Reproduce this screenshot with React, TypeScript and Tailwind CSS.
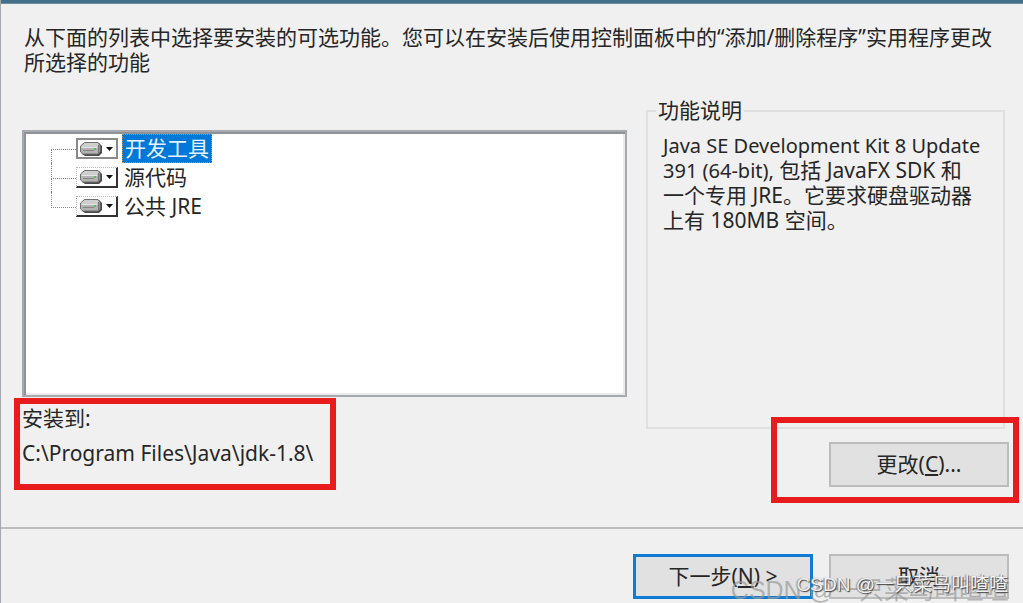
import React from "react";

function DriveIcon() {
  return (
    <svg viewBox="0 0 22 14" className="h-[14px] w-[22px]" aria-hidden="true">
      <path d="M5 1h14l3 3v7l-3 3H5l-3-2V4z" fill="#4a4a4a" />
      <path d="M4.500 .5h13.500l2 2.500v7l-2 2H3L.5 10V4z" fill="#b2b2b2" stroke="#707070" />
      <path d="M5 1h12.500l1 3H1.500z" fill="#cfcfcf" />
      <path d="M1.500 4.500h16v1.500h-16z" fill="#e6e6e6" />
      <path d="M3 8.500h11" stroke="#858585" />
      <rect x="14" y="6" width="2" height="2" fill="#4fbf58" />
      <path d="M18.500 3v8" stroke="#777" />
    </svg>
  );
}

function Feature({ label, selected, last }: { label: string; selected?: boolean; last?: boolean }) {
  return (
    <li className="flex h-[29px] items-center">
      <span className="flex h-full w-[25px] flex-col" aria-hidden="true">
        <span className={selected ? "h-[16px] border-b border-dotted border-[#888]" : "h-[16px] border-b border-l border-dotted border-[#888]"} />
        <span className={last ? "flex-1" : "flex-1 border-l border-dotted border-[#888]"} />
      </span>
      <button
        type="button"
        aria-label={label}
        className={
          selected
            ? "flex h-[21px] w-[42px] items-center gap-[4px] border-2 border-[#8a8a8a] pl-[2px]"
            : "flex h-[21px] w-[42px] items-center gap-[4px] border-r-2 border-b-2 border-l border-t border-dotted border-r-[#333] border-b-[#333] border-t-[#bbb] border-l-[#bbb] pl-[3px] [border-bottom-style:solid] [border-right-style:solid]"
        }
      >
        <DriveIcon />
        <svg viewBox="0 0 7 4" className="h-[4px] w-[7px]" aria-hidden="true">
          <path d="M0 0h7L3.500 4z" fill="#111" />
        </svg>
      </button>
      <span
        className={
          selected
            ? "ml-[4px] flex h-[29px] items-center border border-dotted border-[#d98b46] bg-[#0078d7] px-[2px] text-[#e6f3ff]"
            : "ml-[6px]"
        }
      >
        {label}
      </span>
    </li>
  );
}

export default function App() {
  return (
    <div className="relative flex min-h-screen flex-col overflow-hidden border-l border-[#a5a8ad] bg-[#f0f0f0] font-['Noto_Sans','Noto_Sans_CJK_SC',sans-serif] text-[21px] leading-[25px] text-[#262626]">
      <div className="h-[4px] border-b border-[#6e8b9e] bg-[#44708c]" />
      <main className="flex flex-col pl-[21px] pr-[18px]">
        <p className="mt-[21px] h-[80px] pl-[2px]">
          从下面的列表中选择要安装的可选功能。您可以在安装后使用控制面板中的“添加/删除程序”实用程序更改所选择的功能
        </p>
        <div className="flex gap-[19px]">
          <div className="flex min-w-0 flex-1 flex-col">
            <ul className="mt-[25px] h-[267px] border-2 border-[#a6a9ad] bg-white pl-[27px] pt-[2px] shadow-[inset_2px_2px_0_#8f9296,inset_-2px_-2px_0_#ececec]">
              <Feature label="开发工具" selected />
              <Feature label="源代码" />
              <Feature label="公共 JRE" last />
            </ul>
            <div className="relative mt-[9px]">
              <p>安装到:</p>
              <p className="mt-[10px]">C:\Program Files\Java\jdk-1.8\</p>
              <div className="pointer-events-none absolute -left-[8px] -top-[8px] h-[92px] w-[322px] border-[6px] border-[#e81c1c]" />
            </div>
          </div>
          <div className="flex w-[359px] flex-col">
            <fieldset className="-mt-[7px] h-[331px] border-2 border-[#e0e0e0] pl-[15px]">
              <legend className="-ml-[7px] px-[2px]">功能说明</legend>
              <p className="mt-[10px] pr-[17px]">
                <span className="text-[20px]">Java SE Development Kit 8 Update 391 (64-bit),</span> 包括 JavaFX SDK 和<span className="inline-block">一个专用 JRE。它要求硬盘驱动器</span>上有 180MB 空间。
              </p>
            </fieldset>
            <div className="relative mt-[13px] -mr-[4px] self-end">
              <button type="button" className="block h-[45px] w-[180px] border-2 border-[#bcbcbc] bg-[#e1e1e1]">
                更改(<u>C</u>)...
              </button>
              <div className="pointer-events-none absolute -left-[58px] -top-[25px] h-[86px] w-[248px] border-[6px] border-[#e81c1c]" />
            </div>
          </div>
        </div>
      </main>
      <footer className="mt-[40px] flex justify-end gap-[16px] border-t-2 border-[#bebebe] pb-[5px] pr-[14px] pt-[25px]">
        <button type="button" className="h-[45px] w-[180px] border-[3px] border-[#0f7bd3] bg-[#e1e1e1]">
          下一步(<u>N</u>) &gt;
        </button>
        <button type="button" className="h-[45px] w-[180px] border-2 border-[#bcbcbc] bg-[#e1e1e1]">
          取消
        </button>
      </footer>
      <div className="pointer-events-none absolute -bottom-[2px] right-[14px] whitespace-nowrap font-['Liberation_Sans','Noto_Sans_CJK_SC',sans-serif] text-[25px] leading-[32px] text-[#999]/70">
        CSDN @一只菜鸟叫喳喳
      </div>
      <div className="pointer-events-none absolute bottom-[7px] right-[15px] whitespace-nowrap font-['Liberation_Sans','Noto_Sans_CJK_SC',sans-serif] text-[19px] leading-[24px] text-[#f0f0f0] [text-shadow:1px_1px_1px_#444,-1px_0_1px_#888]">
        CSDN @一只菜鸟叫喳喳
      </div>
    </div>
  );
}
